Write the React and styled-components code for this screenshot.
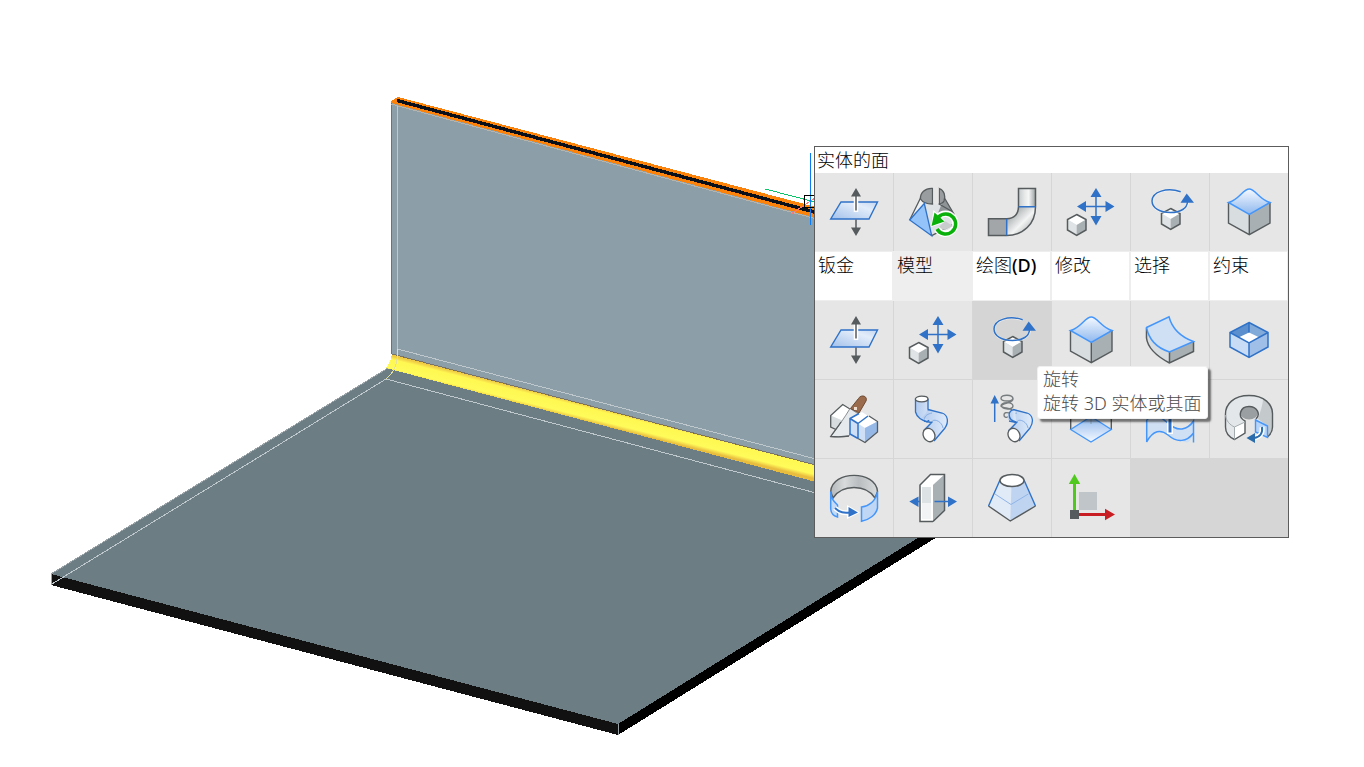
import React from "react";
import styled, { createGlobalStyle, css } from "styled-components";

const GlobalStyle = createGlobalStyle`
  * { box-sizing: border-box; }
  body {
    margin: 0;
    background: #fff;
    font-family: "Open Sans", "Noto Sans CJK SC", sans-serif;
    font-size: 18px;
    color: #000;
  }
`;

const Workspace = styled.main`
  position: relative;
  min-height: 100vh;
  overflow: hidden;
  background: #fff;
`;

const Scene = styled.svg`
  position: absolute;
  inset: 0;
  width: 100%;
  height: 100%;
`;

const QuadMenu = styled.section`
  position: absolute;
  left: 814px;
  top: 146px;
  border: 1px solid #5c5c5c;
  background: #d6d6d6;
`;

const Title = styled.h1`
  margin: 0;
  padding-left: 2px;
  height: 26px;
  background: #fff;
  font-size: 18px;
  font-weight: 300;
  line-height: 26px;
`;

const grid = css`
  display: grid;
  grid-template-columns: repeat(6, 78px);
  gap: 1px;
`;

const ToolGrid = styled.div`
  ${grid}
  grid-auto-rows: 78px;
`;

const TabBar = styled.nav`
  ${grid}
  height: 50px;
  padding: 1px 0;
  background: #eee;
`;

const Tab = styled.button`
  display: flex;
  align-items: flex-start;
  margin: 0 1px 0 0;
  padding: 0 0 0 3px;
  border: 0;
  background: ${(p) => (p.$active ? "#eee" : "#fff")};
  color: #000;
  font: inherit;
  font-weight: 300;
  line-height: 26px;
  white-space: nowrap;
`;

const Latin = styled.span`
  font-family: "Noto Sans", sans-serif;
  font-weight: 500;
`;

const Cell = styled.div`
  position: relative;
  display: flex;
`;

const ToolButton = styled.button`
  display: flex;
  flex: 1;
  align-items: center;
  justify-content: center;
  padding: 0;
  border: 0;
  background: ${(p) => (p.$hot ? "#d5d5d5" : "#e6e6e6")};
`;

const Glyph = styled.svg`
  width: 48px;
  height: 48px;
  overflow: visible;
`;

const Tooltip = styled.div`
  position: absolute;
  z-index: 1;
  left: 64px;
  top: 65px;
  padding: 0 6px 3px 5px;
  border: 1px solid #f0f0f0;
  border-radius: 3px;
  background: #fff;
  box-shadow: 3px 3px 2px rgba(0, 0, 0, 0.5);
  color: #4c4c4c;
  font-family: "Noto Sans", "Noto Sans CJK SC", sans-serif;
  font-weight: 300;
  line-height: 24px;
  white-space: nowrap;
`;

const TipLine = styled.div``;

const G = "#565b5d";
const B = "#2f72c8";
const L = "#4496fb";

const Gradients = () => (
  <defs>
    <linearGradient id="sheet" x1="0" y1="1" x2="1" y2="0">
      <stop offset="0" stopColor="#a3c1ea" />
      <stop offset="0.7" stopColor="#e3edfa" />
      <stop offset="1" stopColor="#c3d6f1" />
    </linearGradient>
    <linearGradient id="bump" x1="0" y1="0" x2="0" y2="1">
      <stop offset="0" stopColor="#f5f9ff" />
      <stop offset="1" stopColor="#8fb8ee" />
    </linearGradient>
    <linearGradient id="floor" x1="0" y1="0" x2="0" y2="1">
      <stop offset="0" stopColor="#8fb8ee" />
      <stop offset="1" stopColor="#f5f9ff" />
    </linearGradient>
    <linearGradient id="metal" x1="0" y1="0" x2="1" y2="0">
      <stop offset="0" stopColor="#c6cacb" />
      <stop offset="0.35" stopColor="#e6e8e8" />
      <stop offset="0.6" stopColor="#f5f6f6" />
      <stop offset="1" stopColor="#9ca0a2" />
    </linearGradient>
    <linearGradient id="band" x1="0" y1="0" x2="1" y2="0">
      <stop offset="0" stopColor="#b4b8ba" />
      <stop offset="0.3" stopColor="#d8dadb" />
      <stop offset="0.6" stopColor="#b9bdbf" />
      <stop offset="1" stopColor="#d8dcdd" />
    </linearGradient>
    <linearGradient id="bend" x1="0.25" y1="0.25" x2="1" y2="1">
      <stop offset="0" stopColor="#b5b8ba" />
      <stop offset="0.4" stopColor="#f3f4f4" />
      <stop offset="1" stopColor="#8e9294" />
    </linearGradient>
    <linearGradient id="pipe" x1="0" y1="0" x2="1" y2="0">
      <stop offset="0" stopColor="#b2cbee" />
      <stop offset="1" stopColor="#e1ecfa" />
    </linearGradient>
    <linearGradient id="weld" gradientUnits="userSpaceOnUse" x1="600" y1="408" x2="596" y2="424">
      <stop offset="0" stopColor="#f0cc45" />
      <stop offset="0.2" stopColor="#fff852" />
      <stop offset="0.75" stopColor="#fffb5a" />
      <stop offset="1" stopColor="#e8bc3e" />
    </linearGradient>
  </defs>
);

const Cube = () => (
  <>
    <path d="M0.5 5.5 9.7 0.5 19 5.5 9.7 11Z" fill="#fff" />
    <path d="M0.5 5.5 9.7 11V21.5L0.5 16Z" fill="#dfe3e5" />
    <path d="M19 5.5 9.7 11V21.5L19 16Z" fill="#a9b0b3" />
    <path d="M9.7 0.5 19 5.5V16L9.7 21.5 0.5 16V5.5Z" fill="none" stroke={G} strokeWidth="1.5" />
  </>
);

const PipeBody = () => (
  <>
    <path d="M17 18C18 14 23 14 25 16C30 19 36 17 39 22C40 27 38 31 35 35L26 46 14 35 23 26 13 23Z" fill="url(#pipe)" />
    <path d="M19 14.5 33 18C39 20 40 27 36 33L25 46M14.5 36 23.5 26.5M22.5 27.5 15 26" fill="none" stroke={B} strokeWidth="1.3" />
    <path d="M15 25C16 20 19 19 23 18M23 27C24 23 33 26 34 33" fill="none" stroke="#87aee4" />
    <ellipse cx="20" cy="40" rx="5.7" ry="7" transform="rotate(-28 20 40)" fill="#fff" stroke={G} strokeWidth="1.3" />
  </>
);

const icons = {
  push: (
    <>
      <path d="M11 14H47.5L39 31H0.7Z" fill="url(#sheet)" stroke={B} strokeWidth="1.4" />
      <path d="M26 6V24" stroke="#fff" strokeWidth="4.5" />
      <path d="M26 6V22.5M26 31.5V42" stroke={G} strokeWidth="1.5" />
      <path d="M26 0 31 8.5H21ZM26 48 31 39.5H21Z" fill={G} />
    </>
  ),
  loft: (
    <>
      <path d="M15.3 15.3C19 17 27 17 32 15L45 26V38L22.7 47.7Z" fill="#dfe2e4" />
      <path d="M11 11 0.7 32 15.3 15.3Z" fill="#f0f1f2" />
      <path d="M35 10 46 27 36 24 29 25Z" fill="#8f9496" />
      <path d="M23.500 0.500C16 0 11 5 11.500 11C14 15 18 16 23.500 16Z" fill="#999da0" stroke={G} strokeWidth="1.3" />
      <path d="M30.300 0.500C35 2 37 8 35 13C34 15 31 16 30.300 16Z" fill="#999da0" stroke={G} strokeWidth="1.3" />
      <path d="M24.3 0V15H29.600V0Z" fill="#e6e6e6" />
      <path d="M11.5 10 0.7 32M35.5 10 45.5 27M30 16 44 24M22.7 47.7 45 36" stroke={G} strokeWidth="1.3" />
      <path d="M15.3 15.5 0.7 32 22.7 47.7Z" fill="#94c3fa" stroke={B} strokeWidth="1.3" />
      <path d="M29 29A10 10 0 1 1 28 41" fill="none" stroke="#fff" strokeWidth="6.5" />
      <path d="M24.5 22 37 34 22 39Z" fill="#fff" />
      <path d="M36 33 44 38 35 42 30 39Z" fill="#c9cccd" />
      <path d="M29.5 29A10 10 0 1 1 28 41" fill="none" stroke="#08b009" strokeWidth="3.5" />
      <path d="M25.5 24.5 35.5 33.5 22.5 38Z" fill="#08b009" />
    </>
  ),
  elbow: (
    <>
      <path d="M30.5 0.5H47.5V18.7H30.5Z" fill="url(#metal)" />
      <path d="M0.5 30.7H18.7V47.5H0.5Z" fill="#a2a6a8" />
      <path d="M30.5 18.7H47.5C47 36 35 48 18.7 47.5V30.7C26 31 31 26 30.5 18.7Z" fill="url(#bend)" />
      <path d="M30.5 0.5H47.5V18.7C47.5 36 35 47.5 18.7 47.5H0.5V30.7H18.7C26 30.7 30.5 26 30.5 18.7Z" fill="none" stroke={G} strokeWidth="1.5" />
      <path d="M30.5 18.7H47.5M18.7 30.7V47.5" stroke={B} strokeWidth="1.5" />
    </>
  ),
  move: (
    <>
      <path d="M29 6V31M17 18.5H41" stroke={B} strokeWidth="1.5" />
      <path d="M29 0 34.5 9H23.5ZM29 37.5 34.5 28H23.5ZM10 18.5 19 13V24ZM47.5 18.5 38.5 13V24Z" fill={B} />
      <g transform="translate(0 26)"><Cube /></g>
    </>
  ),
  rotate: (
    <>
      <g transform="translate(15 20)"><Cube /></g>
      <path d="M34.7 4C21 -1 6 4 6 13C6 20 14 25 24.5 25C35 25 41 20 42 14" fill="none" stroke="#fff" strokeWidth="2.5" opacity="0.5" />
      <path d="M34.7 3.7C21 -1 6 3.7 6 13C6 20 14 24.5 24.5 24.5C35 24.5 41 20 41.5 14" fill="none" stroke={B} strokeWidth="1.5" />
      <path d="M40.7 5.5 48 14.8H34.5Z" fill={B} />
    </>
  ),
  bump: (
    <>
      <path d="M3.5 14.5 24.3 26V46.7L3.5 35Z" fill="#d8dde0" />
      <path d="M45 14.5 24.3 26V46.7L45 35Z" fill="#a9b0b3" />
      <path d="M3.5 14.5V35L24.3 46.7 45 35V14.5M24.3 26V46.7" fill="none" stroke={G} strokeWidth="1.4" />
      <path d="M3.5 14.5C14 12 18 1 24.3 1C30 1 35 12 45 14.5L24.3 26.3Z" fill="url(#bump)" stroke={L} strokeWidth="1.5" />
    </>
  ),
  slab: (
    <>
      <path d="M0.5 11.5V22C2 35 16 43 23.5 47V36Z" fill="#d8dde0" />
      <path d="M23.5 36 47.5 25.5V35.5L23.5 47Z" fill="#a9b0b3" />
      <path d="M0.5 12V22C2 35 16 43 23.5 47L47.5 35.5V25.5M23.5 36V47" fill="none" stroke={G} strokeWidth="1.5" />
      <path d="M0.5 11.5 23 0.7C27 16 38 22 47.5 25.5L23.5 36C11 32 3 24 0.5 11.5Z" fill="#cfdff4" stroke={L} strokeWidth="1.5" />
    </>
  ),
  frame: (
    <>
      <path d="M24 6.5 43 16.5 24 27 5 16.5Z" fill="#fff" />
      <path d="M24 6.5V16.5L13.5 21.5 5 16.5Z" fill="#5b8fcd" />
      <path d="M24 6.5V16.5L34.5 21.5 43 16.5Z" fill="#83abd9" />
      <path d="M5 16.5 24 27V41.5L5 31Z" fill="#c9dcf5" />
      <path d="M43 16.5 24 27V41.5L43 31Z" fill="#9fbfe8" />
      <path d="M24 6.5 43 16.5V31L24 41.5 5 31V16.5ZM5 16.5 24 27 43 16.5M24 27V41.5M24 6.5V16.5" fill="none" stroke={B} strokeWidth="1.5" />
    </>
  ),
  slice: (
    <>
      <path d="M0.7 20.5 12.7 9.5 30 17 20 24V36L12 38 0.7 32Z" fill="#d7dcdf" />
      <path d="M0.7 20.5 12.7 9.5 30 17 16 27Z" fill="#fff" />
      <path d="M20 14 12.7 9.5 0.7 20.5V32L7 35" fill="none" stroke={G} strokeWidth="1.3" />
      <path d="M20 13.5 28.5 19 19 41C13 42 7 42 0.7 41.5 8 32 15 22 20 13.5Z" fill="#e6eaec" stroke="#8a8f91" strokeWidth="1" />
      <path d="M19 41C13 42 7 42 0.7 41.5 4 36.500 8 32 11 27" fill="none" stroke={G} strokeWidth="1.3" />
      <path d="M20 23.5 32 17 47.5 26.5V37L35 47.5 20 39Z" fill="#cfe0f6" />
      <path d="M20 23.5 32 17 47.5 26.5 35 33Z" fill="#fff" />
      <path d="M35 33 47.5 26.5V37L35 47.5Z" fill="#96b8e6" />
      <path d="M39 21 47.5 26.5V37L35 47.5 28 43.5" fill="none" stroke={G} strokeWidth="1.3" />
      <path d="M28 43.5 20 39V23.5L29 18.500M38 21 28 28.5V43.5M28 28.5 20 23.5" fill="none" stroke={B} strokeWidth="1.5" />
      <path d="M28.5 3.5C31 -1 38 1 36 6L29 18 20.5 13.5Z" fill="#9a6b4c" stroke="#6d4a34" />
      <path d="M24 12H27V15H24Z" fill="#f0dfd0" />
    </>
  ),
  sweep: (
    <>
      <path d="M6.5 4.5V17C8 23 13 25 18 27L26 19C21 18 19 17 19 14V4.5Z" fill="url(#pipe)" stroke={B} strokeWidth="1.3" />
      <PipeBody />
      <ellipse cx="12.7" cy="4" rx="6.3" ry="2.8" fill="#fff" stroke={G} strokeWidth="1.3" />
    </>
  ),
  helix: (
    <>
      <path d="M6.7 6V27" stroke={B} strokeWidth="1.5" />
      <path d="M6.7 0 11 8.5H2.5Z" fill={B} />
      <path d="M25 3C25 7 13 7 13 3.5C13 -1 25 -1 25 4C25 8 18 7 14 10C11 14 25 16 25 11C25 6 13 7 13 11C14 14 25 12 25 17C24 20 16 15 16 20C16 22 18 23 20 22" fill="none" stroke="#777c7e" strokeWidth="1.4" />
      <g transform="translate(6 0)"><PipeBody /><path d="M22 27C13 25 13 14 21 15" fill="url(#pipe)" stroke={B} strokeWidth="1.3" /></g>
    </>
  ),
  project: (
    <>
      <path d="M3.7 13V34.5M44.3 13V34.5" stroke={G} strokeWidth="1.4" />
      <path d="M24 21.5 44.3 34.5 24 47 3.7 34.5Z" fill="url(#floor)" stroke={L} strokeWidth="1.3" />
      <path d="M24 10V29" stroke="#91a9bd" strokeWidth="1.3" />
    </>
  ),
  ribbon: (
    <>
      <path d="M0.7 25C14 11 22 36 36 34C41 33 45 30 47.5 26V39C46 42 44 47.500 41 47.500C32 46 26 43 22 40C15 34 7 35 0.7 47Z" fill="#cfdff4" />
      <path d="M0.7 25C14 11 22 36 36 34C41 33 45 30 47.5 26V47.5M0.700 25V47C7 35 15 34 22 40C31 48 41 47 47.500 38" fill="none" stroke={L} strokeWidth="1.5" />
      <path d="M24 17V39" stroke="#fff" strokeWidth="6" />
      <path d="M24 17V37.5" stroke={B} strokeWidth="3" />
    </>
  ),
  revolve: (
    <>
      <path d="M0.5 20C0 9 9 0.5 24 0.5S48 9 47.5 20V32C47 37 44 41 42 43L31 36V25C36 23 34 12 24 12C14 12 13 22 20 26V38L9.5 44.5C4 41 0.5 37 0.5 32Z" fill="#e3e7e9" />
      <path d="M38 4C46 8 48 14 47.5 20V32C47 36 45 40 42.5 42V31L33 24C35 18 38 9 38 4Z" fill="#c4c9cb" />
      <path d="M9.5 32 20 27V38L9.5 44.5Z" fill="#fff" />
      <ellipse cx="24" cy="18" rx="9" ry="6.5" fill="#9a9fa1" />
      <path d="M42.5 42C46 39 47.5 36 47.5 32V20C48 9 39 0.5 24 0.5S0 9 0.5 20V32C0.5 37 4 42 9.5 44.5L20 38V26C12 22 15 11.5 24 11.5C32 11.5 36 19 31 24" fill="none" stroke={G} strokeWidth="1.4" />
      <path d="M9.5 32V44.5M0.5 20C1 26 5 30 9.5 32L20 27" fill="none" stroke="#a5acb0" />
      <path d="M30.5 25 42.5 31V42.5L30.5 37Z" fill="#b8d4f7" stroke={L} strokeWidth="1.4" />
      <path d="M37 32C38 38 35 42 29 43" fill="none" stroke="#fff" strokeWidth="5" />
      <path d="M37 32C38 38 35 42 29 43" fill="none" stroke="#2b6cac" strokeWidth="2" />
      <path d="M21.5 43 30 38V48Z" fill="#2b6cac" />
    </>
  ),
  ring: (
    <>
      <path d="M0.7 17.5C2 -4 46 -4 47.5 17.5L45 24C36 10 12 10 3 24Z" fill="url(#band)" stroke={G} strokeWidth="1.4" />
      <path d="M0.7 17.5V35C1 39 4 42 7.5 43V31C3 27 1 24 0.7 17.5Z" fill="#c4daf6" stroke={L} strokeWidth="1.5" />
      <path d="M47.5 17.5V34C46 41 39 46 31.5 47.3V33C39 32 46 27 47.5 17.5Z" fill="#bfd6f5" stroke={L} strokeWidth="1.5" />
      <path d="M5 34C10 39 14 39 20 38.5" fill="none" stroke="#fff" strokeWidth="5" />
      <path d="M17 31 30 38.5 17 45Z" fill="#fff" />
      <path d="M5 34C10 39 14 39 20 38.5" fill="none" stroke={B} strokeWidth="2" />
      <path d="M18.5 33 28 38.5 18.5 43Z" fill={B} />
    </>
  ),
  thicken: (
    <>
      <path d="M11 11 21.5 0.5H35.5L24 11Z" fill="#fff" />
      <path d="M24 11 35.5 0.5V36.5L24 47.5Z" fill="#a9b0b3" />
      <path d="M11 11H24V47.5H11Z" fill="#fff" />
      <path d="M13 13H22V45H13Z" fill="#dde2e4" />
      <path d="M13 29H22V45H13Z" fill="#fff" opacity="0.6" />
      <path d="M24 47.5H11V11L21.5 0.5H35.5V36.5L24 47.5" fill="none" stroke={G} strokeWidth="1.5" />
      <path d="M7 27.5H11M25.5 27.5H41" stroke={B} strokeWidth="1.5" />
      <path d="M0.3 27.5 9.5 22.5V33ZM48 27.5 39 22.5V33Z" fill={B} />
    </>
  ),
  frustum: (
    <>
      <path d="M12 7 0.5 32 22.3 47 24 12Z" fill="#e1eaf7" />
      <path d="M36 7 47.5 32 22.3 47 23.5 12Z" fill="#bfd4f1" />
      <path d="M12 6 0.5 32M36 6 47.5 32" stroke={B} strokeWidth="1.4" />
      <path d="M7 20 23 30.5 40.3 20" fill="none" stroke="#8fb5e8" />
      <path d="M0.5 32 22.3 47 47.5 32" fill="none" stroke={G} strokeWidth="1.4" />
      <ellipse cx="24" cy="6.5" rx="12" ry="6" fill="#fff" stroke={G} strokeWidth="1.5" />
    </>
  ),
  ucs: (
    <>
      <path d="M12 18H30V36H12Z" fill="#bfc5c9" />
      <path d="M7.5 8V36" stroke="#4fc91e" strokeWidth="3" />
      <path d="M7.5 0 13.2 10H1.8Z" fill="#4fc91e" />
      <path d="M12 40.5H39" stroke="#c81e23" strokeWidth="3" />
      <path d="M48 40.5 38 34.8V46.2Z" fill="#c81e23" />
      <path d="M3 36H12V45H3Z" fill={G} />
    </>
  ),
};

const quickTools = [
  ["push", "推/拉"], ["loft", "重建"], ["elbow", "折弯"],
  ["move", "移动"], ["rotate", "旋转"], ["bump", "曲面"],
];

const tabs = [
  { text: "钣金" },
  { text: "模型", active: true },
  { text: "绘图", latin: "(D)" },
  { text: "修改" },
  { text: "选择" },
  { text: "约束" },
];

const modelTools = [
  ["push", "推/拉"], ["move", "移动"], ["rotate", "旋转", true],
  ["bump", "曲面"], ["slab", "加厚"], ["frame", "抽壳"],
  ["slice", "剖切"], ["sweep", "扫掠"], ["helix", "螺旋"],
  ["project", "投影"], ["ribbon", "拉伸"], ["revolve", "旋转生成"],
  ["ring", "展开"], ["thicken", "偏移面"], ["frustum", "放样"],
  ["ucs", "坐标系"],
];

const Tool = ({ icon, label, hot }) => (
  <Cell>
    <ToolButton type="button" aria-label={label} aria-describedby={hot ? "rotate-tip" : undefined} $hot={hot}>
      <Glyph viewBox="0 0 48 48" aria-hidden="true">{icons[icon]}</Glyph>
    </ToolButton>
    {hot && (
      <Tooltip role="tooltip" id="rotate-tip">
        <TipLine>旋转</TipLine>
        <TipLine>旋转 3D 实体或其面</TipLine>
      </Tooltip>
    )}
  </Cell>
);

const Model = () => (
  <Scene aria-hidden="true" shapeRendering="crispEdges">
    <Gradients />
    <path d="M51 574 388 368 850 480 1000 487 618 724Z" fill="#6c7d83" />
    <path d="M51 574 618 724V735L51 585Z" fill="#111" />
    <path d="M618 724 1000 487V498L618 735Z" fill="#000" />
    <path d="M391 102 850 224V476L391 354Z" fill="#8c9ea7" />
    <path d="M391.5 103V354" stroke="#66757c" />
    <path d="M392 354 850 474V491L386 368C389 364 391 360 392 354Z" fill="url(#weld)" />
    <path d="M392 354 850 474" stroke="#7c7362" />
    <path d="M397.5 103V349L850 468M386 379 850 502M386 379 52 584" fill="none" stroke="#bec8cd" />
    <path d="M397.5 349C398 360 395 372 386 379" fill="none" stroke="#e4e0a0" />
    <path d="M51.5 574V585M618.5 724V735M51 574 388 368" fill="none" stroke="#9aa4a8" />
    <path d="M391 104 850 228" stroke="#b8b4ac" />
    <path d="M391 101 398 97 850 216V227L391 103Z" fill="#fb820b" />
    <path d="M397 100.5 850 221.5" stroke="#091019" strokeWidth="3.4" />
    <path d="M765 189 815 202" stroke="#08c46b" />
    <path d="M791 214 818 196" stroke="#f77" />
    <path d="M810.5 153V225" stroke="#087cf7" />
    <path d="M804.5 195.5H820V207.5H804.5Z" fill="none" stroke="#000" />
  </Scene>
);

export default function App() {
  return (
    <>
      <GlobalStyle />
      <Workspace>
        <Model />
        <QuadMenu>
          <Title>实体的面</Title>
          <ToolGrid>
            {quickTools.map(([icon, label]) => <Tool key={icon} icon={icon} label={label} />)}
          </ToolGrid>
          <TabBar>
            {tabs.map((tab) => (
              <Tab key={tab.text} type="button" $active={tab.active}>
                {tab.text}{tab.latin && <Latin>{tab.latin}</Latin>}
              </Tab>
            ))}
          </TabBar>
          <ToolGrid>
            {modelTools.map(([icon, label, hot]) => <Tool key={icon} icon={icon} label={label} hot={hot} />)}
          </ToolGrid>
        </QuadMenu>
      </Workspace>
    </>
  );
}
